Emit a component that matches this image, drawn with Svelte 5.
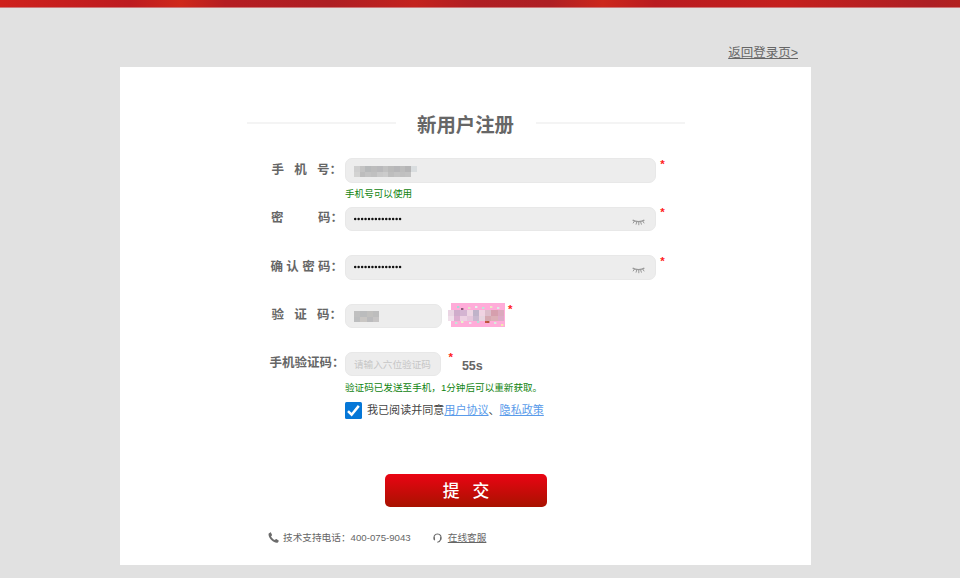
<script>
	// the blurred bits are small grids of grey blocks, one string per line
	const phoneBlocks = [
		["#cfcfcf", "#c3c3c3", "#b7b9ba", "#bcbcbc", "#b9b9bb", "#c1c1c1", "#bababa", "#b6b6b8", "#bcbcbc", "#b5b5b6", "#d9dddf"],
		["#d3d3d2", "#bdbdbd", "#c3c3c3", "#c0c0c0", "#c9c9c9", "#cccccc", "#bebebe", "#c3c3c3", "#c0c0c0", "#c2c2c2", "#ededed"]
	];
	const codeBlocks = [
		["#c0c0c0", "#bbbcbd", "#c1c0be", "#bdbdbd"],
		["#bdbebf", "#c9c6c3", "#bbbbbd", "#c6c4c4"]
	];
	const captchaBlocks = [
		["#ead4e3", "#cfaccb", "#d4b4d2", "#eed5e3", "#bfb3c9", "#f0d3e2", "#dcbcca", "#d69fad", "#dba9bd"],
		["#f0dfea", "#dcaed0", "#edd1e3", "#e5c7dc", "#c9b8cf", "#e7d4df", "#d6a9b2", "#dcb0b7", "#ddaac7"]
	];
	const specks = [
		[6, 3, "#a7d9d5"], [10, 5, "#8d5878"], [17, 4, "#dfe6c8"], [24, 3, "#e7f1ed"], [31, 4, "#bee5d8"],
		[39, 3, "#eee7c5"], [46, 4, "#dee9e3"], [4, 19, "#c3e6d7"], [10, 18, "#e9f4ca"], [18, 19, "#e9e8ee"],
		[26, 18, "#b9ded9"], [34, 18, "#c8553f"], [36, 18, "#b5563a"], [43, 19, "#d7eddc"], [50, 21, "#f2eab0"]
	];

	var password = "00000000000000";
	var confirm = "00000000000000";
	var smsCode = "";
	var agreed = true;
	var seconds = 55;
</script>

{#snippet label(text, cls)}
	<div class="label {cls}">
		<span class="word">{#each text as ch}<span>{ch}</span>{/each}</span><span>：</span>
	</div>
{/snippet}

{#snippet blocks(rows, w, h)}
	<svg class="blocks" width={rows[0].length * w} height={rows.length * h} shape-rendering="crispEdges">
		{#each rows as row, y}
			{#each row as fill, x}
				<rect x={x * w} y={y * h} width={w} height={h} {fill} />
			{/each}
		{/each}
	</svg>
{/snippet}

{#snippet dots(value)}
	<svg class="dots" width="50" height="4" fill="#111">
		{#each value as _, i}
			<circle cx={1.2 + i * 3.45} cy="2" r="1.25" />
		{/each}
	</svg>
{/snippet}

{#snippet closedEye()}
	<svg class="eye" width="13" height="7" viewBox="0 0 13 7" fill="none" stroke="#999">
		<path d="M.6 1C3.5 3.1 9.5 3.1 12.4 1" stroke-width="1.3" />
		<path d="M2.5 2L1 4.3M4.8 2.6L4 5.6M6.8 2.6v3.6M8.5 2.6l1 3M10.7 2L12.2 4.3" stroke-width="1" />
	</svg>
{/snippet}

<div class="page">
	<div class="banner"></div>
	<div class="back"><a href="#login">返回登录页&gt;</a></div>

	<div class="card">
		<div class="title">
			<i></i>
			<h1>新用户注册</h1>
			<i></i>
		</div>

		<div class="row">
			{@render label("手机号", "three")}
			<div class="control">
				<div class="line">
					<div class="field wide">{@render blocks(phoneBlocks, 5.7, 5.5)}</div>
					<b class="star">*</b>
				</div>
				<p class="hint">手机号可以使用</p>
			</div>
		</div>

		<div class="row">
			{@render label("密码", "two")}
			<div class="control">
				<div class="line">
					<div class="field wide">
						{@render dots(password)}
						{@render closedEye()}
					</div>
					<b class="star">*</b>
				</div>
			</div>
		</div>

		<div class="row">
			{@render label("确认密码", "four")}
			<div class="control">
				<div class="line">
					<div class="field wide">
						{@render dots(confirm)}
						{@render closedEye()}
					</div>
					<b class="star">*</b>
				</div>
			</div>
		</div>

		<div class="row">
			{@render label("验证码", "three")}
			<div class="control">
				<div class="line">
					<div class="field">{@render blocks(codeBlocks, 6.3, 5.5)}</div>
					<div class="captcha">
						<svg width="54" height="24">
							{#each specks as [x, y, fill]}
								<rect {x} {y} width="2.4" height="2" {fill} />
							{/each}
						</svg>
						<div class="mask">{@render blocks(captchaBlocks, 6.2, 5.6)}</div>
					</div>
					<b class="star">*</b>
				</div>
			</div>
		</div>

		<div class="row last">
			{@render label("手机验证码", "five")}
			<div class="control">
				<div class="line">
					<input class="field" placeholder="请输入六位验证码" bind:value={smsCode} />
					<b class="star far">*</b>
					<b class="timer">{seconds}s</b>
				</div>
				<p class="hint">验证码已发送至手机，1分钟后可以重新获取。</p>
				<label class="agree">
					<input type="checkbox" bind:checked={agreed} />
					<span class="box">
						{#if agreed}
							<svg width="17" height="17" viewBox="0 0 17 17" fill="none" stroke="#fff" stroke-width="2.5">
								<path d="M3 9.2L6.6 12.7L13.8 3.9" />
							</svg>
						{/if}
					</span>
					<span>我已阅读并同意<a href="#terms">用户协议</a>、<a href="#privacy">隐私政策</a></span>
				</label>
			</div>
		</div>

		<button class="submit"><span>提</span><span>交</span></button>

		<div class="support">
			<svg width="11" height="11" viewBox="0 0 11 11" fill="#6c6c6c">
				<path d="M2.2.4L.7 1.4C0 3.3 1.6 6.4 3.6 8.3c2 1.9 4.8 2.9 6.3 2.1l.9-1.3c.1-.3 0-.5-.2-.7L8.4 7.1c-.3-.1-.5-.1-.7.1l-.9.9C5.3 7.5 3.7 5.8 3 4.3l.9-.9c.2-.2.2-.4.1-.7L2.9.6C2.7.3 2.5.2 2.2.4z" />
			</svg>
			<span class="phone">技术支持电话：400-075-9043</span>
			<svg width="9" height="10" viewBox="0 0 9 10" fill="none" stroke="#6c6c6c">
				<path d="M1.7 7.2C.2 3.6 1.5 1 4.5 1s4.2 2.4 3 5.8C7 8.3 6.2 9.1 4.3 9.2" stroke-width="1.1" />
				<path d="M1.3 4.2v2.6M7.7 4.2v2.6" stroke-width="1.4" />
			</svg>
			<a href="#service">在线客服</a>
		</div>
	</div>
</div>

<style>
	:global(body) {
		background: #e1e1e1;
	}
	.page {
		height: 578px;
		overflow: hidden;
		font-family: "Liberation Sans", "Noto Sans CJK SC", sans-serif;
		color: #666;
	}
	.banner {
		height: 7px;
		border-bottom: 1px solid #cf7779;
		background: linear-gradient(90deg, #cf211c 0, #bd1b20 130px, #cf281b 180px, #b51d22 225px, #ae1e23 330px, #c3221e 415px, #b01e23 475px, #ae1f24 550px, #cc271c 603px, #b91b20 655px, #c5201e 785px, #ad1f24 930px, #b3201f 960px);
	}
	.back {
		height: 59.2px;
		box-sizing: border-box;
		padding: 34.5px 162px 0 0;
		text-align: right;
		font-size: 12.5px;
		line-height: 20px;
	}
	a {
		color: inherit;
		text-decoration: underline;
	}
	.card {
		width: 691.4px;
		height: 497.5px;
		margin-left: 120px;
		box-sizing: border-box;
		padding-top: 42px;
		background: #fff;
	}
	.title {
		display: flex;
		align-items: center;
		height: 29px;
		margin-left: 127px;
	}
	.title i {
		width: 149px;
		height: 2px;
		margin-top: -1px;
		background: #f4f4f4;
	}
	.title h1 {
		margin: 0 22px 0 21px;
		padding-top: 3.4px;
		font-size: 19.4px;
		line-height: 27px;
		font-weight: bold;
	}
	.row {
		display: flex;
		height: 48.45px;
	}
	.title + .row {
		margin-top: 20px;
	}
	.label {
		display: flex;
		box-sizing: border-box;
		width: 225px;
		padding-top: 0.5px;
		line-height: 22.5px;
		font-size: 12.5px;
		font-weight: bold;
		white-space: nowrap;
	}
	.word {
		display: flex;
		justify-content: space-between;
	}
	.three {
		padding-left: 151.5px;
	}
	.three .word {
		width: 58px;
	}
	.two {
		padding-left: 151px;
	}
	.two .word {
		width: 59.5px;
	}
	.four {
		padding-left: 150.5px;
	}
	.four .word {
		width: 60px;
	}
	.five {
		padding-left: 149.5px;
	}
	.line {
		display: flex;
		height: 24.5px;
	}
	.field {
		display: flex;
		align-items: center;
		box-sizing: border-box;
		width: 97px;
		height: 24.5px;
		padding: 0 9px;
		border: 1px solid #e8e8e8;
		border-radius: 7px;
		background: #ededed;
		font-family: inherit;
		font-size: 9.65px;
		outline: none;
	}
	input.field {
		width: 96.4px;
		padding: 0 8px;
	}
	.field::placeholder {
		color: #c6c6c6;
		opacity: 1;
	}
	.wide {
		width: 311.3px;
		justify-content: space-between;
	}
	.field .blocks {
		margin: 2px 0 0 -1px;
	}
	.dots {
		margin-left: -1px;
	}
	.eye {
		margin: 7px 1px 0 0;
	}
	.star {
		margin-left: 4px;
		font-size: 11.5px;
		line-height: 14px;
		margin-top: -1.5px;
		color: #ff2020;
	}
	.far {
		margin-left: 7px;
	}
	.timer {
		margin-left: 9px;
		font-size: 12.5px;
		line-height: 28px;
	}
	.captcha {
		position: relative;
		width: 54px;
		height: 24px;
		margin: -0.5px 0 0 9.3px;
		background: #ffacd9;
	}
	.mask {
		position: absolute;
		left: -3px;
		top: 7px;
		line-height: 0;
	}
	.captcha + .star {
		margin-left: 2.7px;
	}
	.hint {
		margin: 3.3px 0 0;
		font-size: 9.6px;
		line-height: 16px;
		color: #108410;
		white-space: nowrap;
	}
	.last {
		height: 121.8px;
	}
	.agree {
		display: flex;
		align-items: center;
		height: 17px;
		margin-top: 6.4px;
		font-size: 11.05px;
		line-height: 17px;
		color: #444;
		white-space: nowrap;
	}
	.agree input {
		display: none;
	}
	.box {
		width: 17px;
		height: 17px;
		margin-right: 5px;
		border-radius: 1.5px;
		background: #0677d7;
	}
	.box svg {
		display: block;
	}
	.agree a {
		color: #5a9bea;
	}
	.submit {
		display: flex;
		justify-content: center;
		align-items: center;
		gap: 13px;
		width: 162px;
		height: 33px;
		margin-left: 265px;
		padding: 0;
		border: 0;
		border-radius: 5px;
		background: linear-gradient(#ea0413, #a81200);
		color: #fff;
		font-family: inherit;
		font-size: 16.8px;
		font-weight: 500;
	}
	.support {
		display: flex;
		align-items: center;
		height: 16px;
		margin: 23px 0 0 148px;
		font-size: 9.67px;
		line-height: 16px;
	}
	.phone {
		margin: 0 22.5px 0 4px;
	}
	.support a {
		margin-left: 5.5px;
	}
</style>
